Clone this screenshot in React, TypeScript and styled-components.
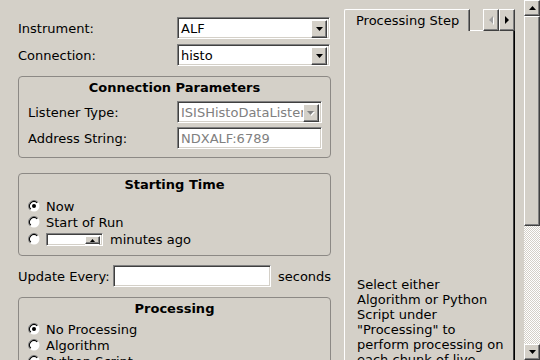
import React from "react";
import styled, { createGlobalStyle, css } from "styled-components";

const GlobalStyle = createGlobalStyle`
  html, body { margin: 0; padding: 0; background: #d4d0c8; overflow: hidden; }
  body { font-family: "DejaVu Sans", "Noto Sans", sans-serif; font-size: 13px; color: #000; }
  * { box-sizing: border-box; }
`;

const raised = css`
  background: #d4d0c8;
  border: 1px solid;
  border-color: #fff #404040 #404040 #fff;
  box-shadow: inset -1px -1px 0 #808080;
`;

const sunken = css`
  border: 1px solid;
  border-color: #808080 #fff #fff #808080;
  box-shadow: inset 1px 1px 0 #404040, inset -1px -1px 0 #d4d0c8;
`;

const Window = styled.div`
  display: flex;
  width: 540px;
  height: 360px;
  overflow: hidden;
  background: #d4d0c8;
`;

const LeftPane = styled.div`
  flex: none;
  width: 344px;
  padding: 17px 13px 0 18px;
  display: flex;
  flex-direction: column;
`;

const FormRow = styled.div<{ $mt?: number }>`
  flex: none;
  display: flex;
  align-items: center;
  height: 22px;
  margin-top: ${(p) => p.$mt ?? 0}px;
  white-space: nowrap;
`;

const Label = styled.span<{ $w?: number; $ml?: number }>`
  flex: none;
  width: ${(p) => (p.$w ? `${p.$w}px` : "auto")};
  margin-left: ${(p) => p.$ml ?? 0}px;
`;

const ComboBox = styled.div<{ $w: number; $disabled?: boolean }>`
  ${sunken};
  flex: none;
  width: ${(p) => p.$w}px;
  height: 22px;
  padding: 2px;
  background: #fff;
  display: flex;
  align-items: stretch;
  color: ${(p) => (p.$disabled ? "#808080" : "#000")};
`;

const FieldText = styled.span`
  flex: 1;
  padding-left: 1px;
  line-height: 18px;
  overflow: hidden;
  white-space: nowrap;
`;

const DropButton = styled.div`
  ${raised};
  flex: none;
  width: 16px;
  height: 18px;
  display: flex;
  align-items: center;
  justify-content: center;
`;

const LineEdit = styled.div<{ $w: number; $disabled?: boolean }>`
  ${sunken};
  flex: none;
  width: ${(p) => p.$w}px;
  height: 22px;
  padding: 2px 2px 2px 3px;
  background: #fff;
  line-height: 18px;
  color: ${(p) => (p.$disabled ? "#808080" : "#000")};
`;

const GroupBox = styled.div<{ $mt: number; $pb: number }>`
  flex: none;
  margin-top: ${(p) => p.$mt}px;
  border: 1px solid #8c8985;
  border-radius: 4px;
  padding-bottom: ${(p) => p.$pb}px;
  display: flex;
  flex-direction: column;
`;

const GroupTitle = styled.div<{ $mb: number }>`
  font-weight: bold;
  text-align: center;
  line-height: 16px;
  padding-top: 3px;
  margin-bottom: ${(p) => p.$mb}px;
`;

const GroupBody = styled.div<{ $gap: number }>`
  display: flex;
  flex-direction: column;
  gap: ${(p) => p.$gap}px;
  padding-left: 9px;
`;

const RadioRow = styled.div<{ $h?: number }>`
  display: flex;
  align-items: center;
  height: ${(p) => p.$h ?? 16}px;
  gap: 6px;
  white-space: nowrap;
`;

const SpinBox = styled.div`
  ${sunken};
  flex: none;
  width: 57px;
  height: 13px;
  padding: 2px;
  background: #fff;
  display: flex;
  justify-content: flex-end;
  overflow: hidden;
`;

const SpinButtons = styled.div`
  width: 15px;
  display: flex;
  flex-direction: column;
`;

const SpinBtn = styled.div`
  ${raised};
  height: 8px;
  flex: none;
  display: flex;
  justify-content: center;
  padding-top: 2px;
`;

const Suffix = styled.span`
  margin-left: 1px;
`;

const TabArea = styled.div`
  flex: none;
  width: 171px;
  padding-top: 9px;
  display: flex;
  flex-direction: column;
`;

const TabBar = styled.div`
  flex: none;
  display: flex;
  height: 22px;
`;

const Tab = styled.div`
  flex: none;
  width: 126px;
  height: 22px;
  border-top: 1px solid #fff;
  border-left: 1px solid #fff;
  border-right: 1px solid #404040;
  border-top-left-radius: 2px;
  box-shadow: inset -1px 0 0 #808080;
  padding-left: 11px;
  display: flex;
  align-items: center;
  white-space: nowrap;
`;

const TabFiller = styled.div`
  flex: 1;
  border-bottom: 1px solid #fff;
`;

const TabScrollButton = styled.div`
  ${raised};
  flex: none;
  width: 16px;
  height: 22px;
  display: flex;
  align-items: center;
  justify-content: center;
`;

const TabPanel = styled.div`
  flex: 1;
  border-left: 1px solid #fff;
  border-right: 1px solid #000;
  box-shadow: inset -1px 0 0 #404040;
  padding: 246px 0 0 12px;
  line-height: 15px;
  white-space: nowrap;
`;

const ScrollBar = styled.div`
  flex: none;
  width: 16px;
  height: 360px;
  margin-left: 9px;
  display: flex;
  flex-direction: column;
`;

const ScrollArrow = styled.div`
  ${raised};
  flex: none;
  height: 16px;
  display: flex;
  align-items: center;
  justify-content: center;
`;

const Thumb = styled.div<{ $h: number }>`
  ${raised};
  flex: none;
  height: ${(p) => p.$h}px;
`;

const Track = styled.div`
  flex: 1;
  background-color: #d4d0c8;
  background-image: conic-gradient(#fff 25%, #d4d0c8 0 50%, #fff 0 75%, #d4d0c8 0);
  background-size: 2px 2px;
`;

const DownTri = ({ color = "#000" }: { color?: string }) => (
  <svg width="7" height="4" viewBox="0 0 7 4">
    <polygon points="0,0 7,0 3.5,4" fill={color} />
  </svg>
);

const DisabledDownTri = () => (
  <svg width="8" height="5" viewBox="0 0 8 5">
    <polygon points="1,1 8,1 4.5,5" fill="#fff" />
    <polygon points="0,0 7,0 3.5,4" fill="#808080" />
  </svg>
);

const UpTri = ({ w = 7, h = 4 }: { w?: number; h?: number }) => (
  <svg width={w} height={h} viewBox={`0 0 ${w} ${h}`}>
    <polygon points={`0,${h} ${w},${h} ${w / 2},0`} fill="#000" />
  </svg>
);

const RightTri = () => (
  <svg width="4" height="8" viewBox="0 0 4 8">
    <polygon points="0,0 4,4 0,8" fill="#000" />
  </svg>
);

const LeftTriDisabled = () => (
  <svg width="5" height="9" viewBox="0 0 5 9">
    <polygon points="5,1 1,5 5,9" fill="#fff" />
    <polygon points="4,0 0,4 4,8" fill="#a0a0a0" />
  </svg>
);

const Radio = ({ checked }: { checked?: boolean }) => (
  <svg width="12" height="12" viewBox="0 0 12 12" style={{ flex: "none" }}>
    <circle cx="6" cy="6" r="5.5" fill="#fff" />
    <path d="M2.1 9.9 A5.5 5.5 0 0 1 9.9 2.1" fill="none" stroke="#808080" strokeWidth="1" />
    <path d="M2.8 9.2 A4.5 4.5 0 0 1 9.2 2.8" fill="none" stroke="#000" strokeWidth="1.2" />
    {checked && <circle cx="6" cy="6" r="2" fill="#000" />}
  </svg>
);

const Combo = ({ text, w, disabled }: { text: string; w: number; disabled?: boolean }) => (
  <ComboBox $w={w} $disabled={disabled}>
    <FieldText>{text}</FieldText>
    <DropButton>{disabled ? <DisabledDownTri /> : <DownTri />}</DropButton>
  </ComboBox>
);

export default function App() {
  return (
    <>
      <GlobalStyle />
      <Window>
        <LeftPane>
          <FormRow>
            <Label $w={159}>Instrument:</Label>
            <Combo text="ALF" w={153} />
          </FormRow>
          <FormRow $mt={5}>
            <Label $w={159}>Connection:</Label>
            <Combo text="histo" w={153} />
          </FormRow>

          <GroupBox $mt={10} $pb={8}>
            <GroupTitle $mb={5}>Connection Parameters</GroupTitle>
            <GroupBody $gap={4}>
              <FormRow>
                <Label $w={149}>Listener Type:</Label>
                <Combo text="ISISHistoDataListener" w={145} disabled />
              </FormRow>
              <FormRow>
                <Label $w={149}>Address String:</Label>
                <LineEdit $w={145} $disabled>NDXALF:6789</LineEdit>
              </FormRow>
            </GroupBody>
          </GroupBox>

          <GroupBox $mt={15} $pb={7}>
            <GroupTitle $mb={5}>Starting Time</GroupTitle>
            <GroupBody $gap={0}>
              <RadioRow>
                <Radio checked />
                <span>Now</span>
              </RadioRow>
              <RadioRow>
                <Radio />
                <span>Start of Run</span>
              </RadioRow>
              <RadioRow $h={18}>
                <Radio />
                <SpinBox>
                  <SpinButtons>
                    <SpinBtn>
                      <UpTri w={5} h={3} />
                    </SpinBtn>
                    <SpinBtn />
                  </SpinButtons>
                </SpinBox>
                <Suffix>minutes ago</Suffix>
              </RadioRow>
            </GroupBody>
          </GroupBox>

          <FormRow $mt={9}>
            <Label $w={95}>Update Every:</Label>
            <LineEdit $w={158} />
            <Label $ml={7}>seconds</Label>
          </FormRow>

          <GroupBox $mt={10} $pb={6}>
            <GroupTitle $mb={4}>Processing</GroupTitle>
            <GroupBody $gap={0}>
              <RadioRow>
                <Radio checked />
                <span>No Processing</span>
              </RadioRow>
              <RadioRow>
                <Radio />
                <span>Algorithm</span>
              </RadioRow>
              <RadioRow>
                <Radio />
                <span>Python Script</span>
              </RadioRow>
            </GroupBody>
          </GroupBox>
        </LeftPane>

        <TabArea>
          <TabBar>
            <Tab>Processing Step</Tab>
            <TabFiller />
            <TabScrollButton>
              <LeftTriDisabled />
            </TabScrollButton>
            <TabScrollButton>
              <RightTri />
            </TabScrollButton>
          </TabBar>
          <TabPanel>
            Select either
            <br />
            Algorithm or Python
            <br />
            Script under
            <br />
            "Processing" to
            <br />
            perform processing on
            <br />
            each chunk of live
            <br />
            data.
          </TabPanel>
        </TabArea>

        <ScrollBar>
          <ScrollArrow>
            <UpTri />
          </ScrollArrow>
          <Thumb $h={210} />
          <Track />
          <ScrollArrow>
            <DownTri />
          </ScrollArrow>
        </ScrollBar>
      </Window>
    </>
  );
}
